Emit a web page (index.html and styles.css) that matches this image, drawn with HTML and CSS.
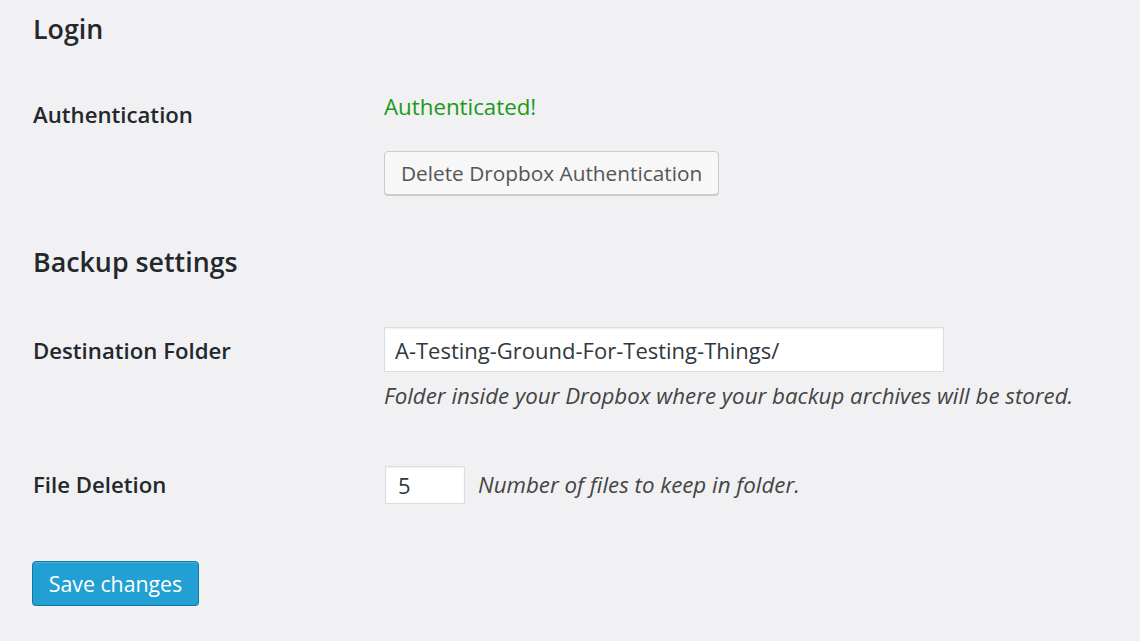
FILE: index.html
```html
<!DOCTYPE html>
<html lang="en">
<head>
<meta charset="utf-8">
<title>Dropbox Backup Settings</title>
<link rel="stylesheet" href="styles.css">
</head>
<body>
<div class="wrap">
  <h2 class="section-title title-login">Login</h2>
  <div class="row row-auth">
    <div class="label">Authentication</div>
    <div class="field">
      <div class="status">Authenticated!</div>
      <button class="btn" type="button">Delete Dropbox Authentication</button>
    </div>
  </div>

  <h2 class="section-title title-backup">Backup settings</h2>
  <div class="row row-dest">
    <div class="label">Destination Folder</div>
    <div class="field">
      <input class="text-input wide" type="text" value="A-Testing-Ground-For-Testing-Things/">
      <p class="desc">Folder inside your Dropbox where your backup archives will be stored.</p>
    </div>
  </div>
  <div class="row row-del">
    <div class="label">File Deletion</div>
    <div class="field inline">
      <input class="text-input small" type="text" value="5">
      <span class="desc inline-desc">Number of files to keep in folder.</span>
    </div>
  </div>

  <div class="submit">
    <button class="btn-primary" type="button">Save changes</button>
  </div>
</div>
</body>
</html>
```
FILE: styles.css
```css
html, body {
  margin: 0;
  padding: 0;
  background: #f1f0f3;
}
body {
  font-family: "Open Sans", "Noto Sans", sans-serif;
  color: #23282d;
  font-size: 22px;
}
.wrap {
  padding: 0 0 0 33px;
}
.section-title {
  font-size: 26.8px;
  font-weight: 600;
  margin: 0;
  line-height: 36px;
  color: #23282d;
}
.title-login {
  padding-top: 11px;
}
.title-backup {
  margin-top: 49px;
}
.row {
  display: flex;
  align-items: flex-start;
}
.label {
  width: 351px;
  flex: none;
  font-weight: 600;
  font-size: 22.2px;
  line-height: 30px;
}
.row-auth {
  margin-top: 45px;
}
.row-auth .label {
  padding-top: 8px;
}
.status {
  color: #1a9a1a;
  font-size: 22.3px;
  line-height: 30px;
}
.btn {
  display: block;
  margin-top: 29px;
  height: 44px;
  padding: 0 16px;
  font-family: inherit;
  font-size: 20.8px;
  color: #555;
  background: #f7f7f7;
  border: 1px solid #cccccc;
  border-radius: 4px;
  box-shadow: 0 1px 0 #ccc;
}
.row-dest {
  margin-top: 47px;
}
.row-dest .label {
  padding-top: 9px;
}
.text-input {
  font-family: inherit;
  font-size: 22px;
  color: #32373c;
  background: #fff;
  border: 1px solid #dddddd;
  box-shadow: inset 0 1px 2px rgba(0,0,0,0.07);
  box-sizing: border-box;
  margin: 0;
  padding: 0 10px;
}
.text-input.wide {
  width: 560px;
  height: 45px;
  display: block;
}
.desc {
  font-style: italic;
  color: #444;
  margin: 0;
  font-size: 22.3px;
  line-height: 30px;
}
.row-dest .desc {
  margin-top: 9px;
}
.row-del {
  margin-top: 55px;
}
.row-del .label {
  padding-top: 4px;
}
.field.inline {
  display: flex;
  align-items: center;
}
.text-input.small {
  width: 80px;
  height: 38px;
  margin-left: 1px;
  padding: 0 12px;
}
.inline-desc {
  margin-left: 13px;
}
.submit {
  margin-top: 57px;
}
.btn-primary {
  height: 45px;
  width: 167px;
  margin-left: -1px;
  font-family: inherit;
  font-size: 21.3px;
  color: #fff;
  background: #22a0d3;
  border: 1px solid #0e77a8;
  border-radius: 4px;
  box-shadow: inset 0 1px 0 rgba(120,200,230,0.5), 0 1px 0 rgba(0,0,0,0.15);
  padding: 0;
}
```
